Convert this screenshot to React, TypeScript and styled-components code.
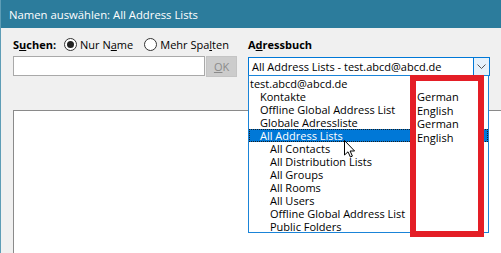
import styled, { createGlobalStyle } from "styled-components"

const GlobalStyle = createGlobalStyle`
  html, body {
    margin: 0;
    padding: 0;
    background: #f0f0f0;
  }
  body {
    font-family: "Open Sans", "Noto Sans", sans-serif;
    font-size: 11px;
    color: #000;
    overflow: hidden;
  }
`

const levels = [
  { text: "test.abcd@abcd.de", level: 0 },
  { text: "Kontakte", level: 1 },
  { text: "Offline Global Address List", level: 1 },
  { text: "Globale Adressliste", level: 1 },
  { text: "All Address Lists", level: 1, selected: true },
  { text: "All Contacts", level: 2 },
  { text: "All Distribution Lists", level: 2 },
  { text: "All Groups", level: 2 },
  { text: "All Rooms", level: 2 },
  { text: "All Users", level: 2 },
  { text: "Offline Global Address List", level: 2 },
  { text: "Public Folders", level: 2 },
]

const languages = ["German", "English", "German", "English"]

const App = () => {
  return (
    <>
      <GlobalStyle />
      <Window>
        <TitleBar>Namen auswählen: All Address Lists</TitleBar>
        <Body>
          <TopGrid>
            <Column>
              <LabelRow>
                <Label>
                  S<u>u</u>chen:
                </Label>
                <RadioOption>
                  <Radio $checked />
                  <span>
                    Nur N<u>a</u>me
                  </span>
                </RadioOption>
                <RadioOption>
                  <Radio />
                  <span>
                    Mehr Spa<u>l</u>ten
                  </span>
                </RadioOption>
              </LabelRow>
              <InputRow>
                <SearchInput />
                <OkButton>
                  <span>
                    <u>O</u>K
                  </span>
                </OkButton>
              </InputRow>
            </Column>
            <Column>
              <LabelRow>
                <Label>
                  A<u>d</u>ressbuch
                </Label>
              </LabelRow>
              <ComboWrap>
                <Combo>
                  <ComboText>All Address Lists - test.abcd@abcd.de</ComboText>
                  <ArrowButton>
                    <svg width="9" height="6" viewBox="0 0 9 6">
                      <polyline
                        points="0.5,0.5 4.5,4.5 8.5,0.5"
                        fill="none"
                        stroke="#555"
                        strokeWidth="1"
                      />
                    </svg>
                  </ArrowButton>
                </Combo>
                <Popup>
                  {levels.map((item, i) => (
                    <Item key={i} $level={item.level} $selected={item.selected}>
                      {item.text}
                    </Item>
                  ))}
                </Popup>
              </ComboWrap>
            </Column>
          </TopGrid>
          <ListPanel />
        </Body>
        <Annotation>
          {languages.map((lang, i) => (
            <AnnotationLine key={i}>{lang}</AnnotationLine>
          ))}
        </Annotation>
        <Cursor width="12" height="18" viewBox="0 0 12 18">
          <path
            d="M0.5,0.5 L0.5,15 L4,11.8 L6.4,17 L8.4,16.1 L6.1,11 L10.6,11 Z"
            fill="#fff"
            stroke="#000"
            strokeWidth="1"
            strokeLinejoin="round"
          />
        </Cursor>
      </Window>
    </>
  )
}

const Window = styled.div`
  position: relative;
  width: 501px;
  height: 253px;
  box-sizing: border-box;
  display: flex;
  flex-direction: column;
  background: #f0f0f0;
  border-left: 1px solid #5e9db6;
  overflow: hidden;
`

const TitleBar = styled.div`
  height: 28px;
  flex-shrink: 0;
  display: flex;
  align-items: center;
  padding-left: 8px;
  background: #2c7c9c;
  color: #fff;
  font-size: 11.3px;
`

const Body = styled.div`
  flex: 1;
  display: flex;
  flex-direction: column;
  padding: 9px 0 0 12px;
`

const TopGrid = styled.div`
  display: grid;
  grid-template-columns: 224px 242px;
  column-gap: 11px;
`

const Column = styled.div`
  display: flex;
  flex-direction: column;
`

const LabelRow = styled.div`
  height: 14px;
  display: flex;
  align-items: center;
  white-space: nowrap;
`

const Label = styled.span`
  font-weight: 700;
  margin-right: 8px;
`

const RadioOption = styled.label`
  display: flex;
  align-items: center;
  gap: 3px;
  margin-right: 11px;
`

const Radio = styled.span<{ $checked?: boolean }>`
  position: relative;
  width: 13px;
  height: 13px;
  box-sizing: border-box;
  border: 1px solid #333;
  border-radius: 50%;
  background: #fff;

  &::after {
    content: "";
    display: ${({ $checked }) => ($checked ? "block" : "none")};
    position: absolute;
    left: 2px;
    top: 2px;
    width: 7px;
    height: 7px;
    border-radius: 50%;
    background: #222;
  }
`

const InputRow = styled.div`
  display: flex;
  margin-top: 5px;
  gap: 1px;
`

const SearchInput = styled.div`
  width: 193px;
  height: 20px;
  box-sizing: border-box;
  border: 1px solid #a9a9a9;
  background: #fff;
`

const OkButton = styled.div`
  width: 31px;
  height: 21px;
  box-sizing: border-box;
  display: flex;
  align-items: center;
  justify-content: center;
  background: #cccccc;
  border: 1px solid #c4c4c4;
  color: #8a8a8a;
`

const ComboWrap = styled.div`
  position: relative;
  margin-top: 6px;
`

const Combo = styled.div`
  height: 19px;
  box-sizing: border-box;
  display: flex;
  align-items: center;
  border: 1px solid #0078d7;
  background: #fff;
`

const ComboText = styled.span`
  flex: 1;
  padding-left: 3px;
  white-space: nowrap;
`

const ArrowButton = styled.span`
  width: 16px;
  height: 17px;
  box-sizing: border-box;
  display: flex;
  align-items: center;
  justify-content: center;
  background: #e5f1fb;
  border-left: 1px solid #0078d7;
`

const Popup = styled.div`
  position: absolute;
  top: 18px;
  left: 0;
  width: 241px;
  height: 158px;
  box-sizing: border-box;
  padding-top: 1px;
  border: 1px solid #1a84d8;
  background: #fff;
  overflow: hidden;
  z-index: 2;
`

const Item = styled.div<{ $level: number; $selected?: boolean }>`
  height: 13px;
  line-height: 13px;
  box-sizing: border-box;
  padding-left: ${({ $level }) => 1 + $level * 10}px;
  white-space: nowrap;
  background: ${({ $selected }) => ($selected ? "#0078d7" : "transparent")};
  color: ${({ $selected }) => ($selected ? "#fff" : "#000")};
  outline: ${({ $selected }) => ($selected ? "1px dotted #1d1d1d" : "none")};
  outline-offset: -1px;
`

const ListPanel = styled.div`
  flex: 1;
  width: 500px;
  margin-top: 33px;
  box-sizing: border-box;
  border: 1px solid #8a8a8a;
  border-bottom: none;
  background: #fff;
`

const Annotation = styled.div`
  position: absolute;
  left: 409px;
  top: 75px;
  width: 74px;
  height: 162px;
  box-sizing: border-box;
  padding: 9px 0 0 1px;
  border: 6px solid #e41e26;
  background: #fff;
  z-index: 3;
`

const AnnotationLine = styled.div`
  height: 13.5px;
  line-height: 13.5px;
  white-space: nowrap;
`

const Cursor = styled.svg`
  position: absolute;
  left: 343px;
  top: 140px;
  z-index: 4;
`

export default App
